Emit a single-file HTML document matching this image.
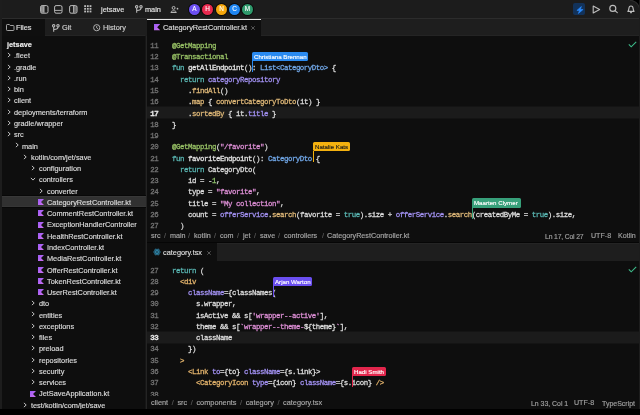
<!DOCTYPE html>
<html><head><meta charset="utf-8"><style>
*{margin:0;padding:0;box-sizing:border-box}
html,body{width:640px;height:415px;overflow:hidden;-webkit-font-smoothing:antialiased;background:#0e0e0e;font-family:"Liberation Sans",sans-serif;color:#d4d4d4}
.a{position:absolute}
.ui{will-change:transform;font-size:7.35px;white-space:pre;-webkit-text-stroke:0.15px}
.code{font-family:"Liberation Mono",monospace;font-size:6.667px;white-space:pre}
.line{will-change:transform;position:absolute;left:147px;width:493px;height:11.27px;line-height:11.27px;font-family:"Liberation Mono",monospace;font-size:6.667px;white-space:pre;color:#dedede}
.line .ln{position:absolute;left:-0.7px;top:2.0px;width:12px;text-align:right;color:#767676;font-size:7.4px;letter-spacing:-0.44px;-webkit-text-stroke:0.27px}
.line .ln.cur{color:#e8e8e8;font-weight:bold}
.line .cl{position:absolute;top:2.0px;font-size:7.4px;letter-spacing:-0.44px;-webkit-text-stroke:0.27px}
.hl{background:#1b1b1b}
.k{color:#5ab8b4}.an{color:#98c266}.ty{color:#72a9ea}.pr{color:#a291f2}.fn{color:#e0b979}.st{color:#de8fd6}.nu{color:#90c46b}.tg{color:#e4b46c}.fd{color:#e6e6e6}
</style></head><body>
<div class="a" style="left:0;top:0;width:640px;height:18px;background:#1c1c1c"></div>
<div class="a" style="left:0;top:18px;width:640px;height:1px;background:#2c2c2c"></div>
<div class="a" style="left:0;top:19px;width:640px;height:17px;background:#1e1e1e"></div>
<div class="a" style="left:0;top:19px;width:45px;height:17px;background:#0f0f0f"></div>
<div class="a" style="left:145px;top:36px;width:2px;height:373px;background:#161616"></div>
<div class="a" style="left:145.5px;top:36px;width:1px;height:373px;background:#242424"></div>
<div class="a" style="left:147px;top:19px;width:114px;height:17px;background:#0e0e0e"></div>
<div class="a" style="left:147px;top:19px;width:114px;height:1px;background:#e8e8e8"></div>
<div class="a ui" style="left:6.80px;top:39.10px;line-height:11.27px;font-weight:bold;color:#ececec">jetsave</div>
<svg class="a" style="left:6.50px;top:52.27px" width="4" height="6" viewBox="0 0 4 6"><path d="M0.9 0.9 L3.2 3 L0.9 5.1" fill="none" stroke="#c8c8c8" stroke-width="0.95"/></svg>
<div class="a ui" style="left:14.20px;top:50.37px;line-height:11.27px;color:#dcdcdc">.fleet</div>
<svg class="a" style="left:6.50px;top:63.54px" width="4" height="6" viewBox="0 0 4 6"><path d="M0.9 0.9 L3.2 3 L0.9 5.1" fill="none" stroke="#c8c8c8" stroke-width="0.95"/></svg>
<div class="a ui" style="left:14.20px;top:61.64px;line-height:11.27px;color:#dcdcdc">.gradle</div>
<svg class="a" style="left:6.50px;top:74.81px" width="4" height="6" viewBox="0 0 4 6"><path d="M0.9 0.9 L3.2 3 L0.9 5.1" fill="none" stroke="#c8c8c8" stroke-width="0.95"/></svg>
<div class="a ui" style="left:14.20px;top:72.91px;line-height:11.27px;color:#dcdcdc">.run</div>
<svg class="a" style="left:6.50px;top:86.08px" width="4" height="6" viewBox="0 0 4 6"><path d="M0.9 0.9 L3.2 3 L0.9 5.1" fill="none" stroke="#c8c8c8" stroke-width="0.95"/></svg>
<div class="a ui" style="left:14.20px;top:84.18px;line-height:11.27px;color:#dcdcdc">bin</div>
<svg class="a" style="left:6.50px;top:97.35px" width="4" height="6" viewBox="0 0 4 6"><path d="M0.9 0.9 L3.2 3 L0.9 5.1" fill="none" stroke="#c8c8c8" stroke-width="0.95"/></svg>
<div class="a ui" style="left:14.20px;top:95.45px;line-height:11.27px;color:#dcdcdc">client</div>
<svg class="a" style="left:6.50px;top:108.62px" width="4" height="6" viewBox="0 0 4 6"><path d="M0.9 0.9 L3.2 3 L0.9 5.1" fill="none" stroke="#c8c8c8" stroke-width="0.95"/></svg>
<div class="a ui" style="left:14.20px;top:106.72px;line-height:11.27px;color:#dcdcdc">deployments/terraform</div>
<svg class="a" style="left:6.50px;top:119.89px" width="4" height="6" viewBox="0 0 4 6"><path d="M0.9 0.9 L3.2 3 L0.9 5.1" fill="none" stroke="#c8c8c8" stroke-width="0.95"/></svg>
<div class="a ui" style="left:14.20px;top:117.99px;line-height:11.27px;color:#dcdcdc">gradle/wrapper</div>
<svg class="a" style="left:6.50px;top:131.16px" width="4" height="6" viewBox="0 0 4 6"><path d="M0.9 0.9 L3.2 3 L0.9 5.1" fill="none" stroke="#c8c8c8" stroke-width="0.95"/></svg>
<div class="a ui" style="left:14.20px;top:129.26px;line-height:11.27px;color:#dcdcdc">src</div>
<svg class="a" style="left:14.70px;top:142.43px" width="4" height="6" viewBox="0 0 4 6"><path d="M0.9 0.9 L3.2 3 L0.9 5.1" fill="none" stroke="#c8c8c8" stroke-width="0.95"/></svg>
<div class="a ui" style="left:22.40px;top:140.53px;line-height:11.27px;color:#dcdcdc">main</div>
<svg class="a" style="left:22.90px;top:153.70px" width="4" height="6" viewBox="0 0 4 6"><path d="M0.9 0.9 L3.2 3 L0.9 5.1" fill="none" stroke="#c8c8c8" stroke-width="0.95"/></svg>
<div class="a ui" style="left:30.60px;top:151.80px;line-height:11.27px;color:#dcdcdc">kotlin/com/jet/save</div>
<svg class="a" style="left:31.10px;top:164.97px" width="4" height="6" viewBox="0 0 4 6"><path d="M0.9 0.9 L3.2 3 L0.9 5.1" fill="none" stroke="#c8c8c8" stroke-width="0.95"/></svg>
<div class="a ui" style="left:38.80px;top:163.07px;line-height:11.27px;color:#dcdcdc">configuration</div>
<svg class="a" style="left:30.10px;top:177.24px" width="6" height="4" viewBox="0 0 6 4"><path d="M0.9 0.9 L3 3.1 L5.1 0.9" fill="none" stroke="#c8c8c8" stroke-width="0.95"/></svg>
<div class="a ui" style="left:38.80px;top:174.34px;line-height:11.27px;color:#dcdcdc">controllers</div>
<svg class="a" style="left:39.30px;top:187.51px" width="4" height="6" viewBox="0 0 4 6"><path d="M0.9 0.9 L3.2 3 L0.9 5.1" fill="none" stroke="#c8c8c8" stroke-width="0.95"/></svg>
<div class="a ui" style="left:47.00px;top:185.61px;line-height:11.27px;color:#dcdcdc">converter</div>
<div class="a" style="left:0;top:195px;width:146px;height:13.4px;background:linear-gradient(to bottom,#080808 0,#080808 1px,#383838 1px,#383838 2px,#313131 2px,#313131 11.4px,#363636 11.4px,#363636 12.4px,#080808 12.4px)"></div>
<svg class="a" style="left:38.30px;top:198.98px" width="6.0" height="6.0" viewBox="0 0 10 10"><defs><linearGradient id="kg" x1="0" y1="0" x2="1" y2="1"><stop offset="0" stop-color="#9b5cf6"/><stop offset="1" stop-color="#d070f0"/></linearGradient></defs><path d="M0 0 H10 L5 5 L10 10 H0 Z" fill="url(#kg)"/></svg>
<div class="a ui" style="left:47.00px;top:196.88px;line-height:11.27px;color:#dcdcdc">CategoryRestController.kt</div>
<svg class="a" style="left:38.30px;top:210.25px" width="6.0" height="6.0" viewBox="0 0 10 10"><defs><linearGradient id="kg" x1="0" y1="0" x2="1" y2="1"><stop offset="0" stop-color="#9b5cf6"/><stop offset="1" stop-color="#d070f0"/></linearGradient></defs><path d="M0 0 H10 L5 5 L10 10 H0 Z" fill="url(#kg)"/></svg>
<div class="a ui" style="left:47.00px;top:208.15px;line-height:11.27px;color:#dcdcdc">CommentRestController.kt</div>
<svg class="a" style="left:38.30px;top:221.52px" width="6.0" height="6.0" viewBox="0 0 10 10"><defs><linearGradient id="kg" x1="0" y1="0" x2="1" y2="1"><stop offset="0" stop-color="#9b5cf6"/><stop offset="1" stop-color="#d070f0"/></linearGradient></defs><path d="M0 0 H10 L5 5 L10 10 H0 Z" fill="url(#kg)"/></svg>
<div class="a ui" style="left:47.00px;top:219.42px;line-height:11.27px;color:#dcdcdc">ExceptionHandlerController</div>
<svg class="a" style="left:38.30px;top:232.79px" width="6.0" height="6.0" viewBox="0 0 10 10"><defs><linearGradient id="kg" x1="0" y1="0" x2="1" y2="1"><stop offset="0" stop-color="#9b5cf6"/><stop offset="1" stop-color="#d070f0"/></linearGradient></defs><path d="M0 0 H10 L5 5 L10 10 H0 Z" fill="url(#kg)"/></svg>
<div class="a ui" style="left:47.00px;top:230.69px;line-height:11.27px;color:#dcdcdc">HealthRestController.kt</div>
<svg class="a" style="left:38.30px;top:244.06px" width="6.0" height="6.0" viewBox="0 0 10 10"><defs><linearGradient id="kg" x1="0" y1="0" x2="1" y2="1"><stop offset="0" stop-color="#9b5cf6"/><stop offset="1" stop-color="#d070f0"/></linearGradient></defs><path d="M0 0 H10 L5 5 L10 10 H0 Z" fill="url(#kg)"/></svg>
<div class="a ui" style="left:47.00px;top:241.96px;line-height:11.27px;color:#dcdcdc">IndexController.kt</div>
<svg class="a" style="left:38.30px;top:255.33px" width="6.0" height="6.0" viewBox="0 0 10 10"><defs><linearGradient id="kg" x1="0" y1="0" x2="1" y2="1"><stop offset="0" stop-color="#9b5cf6"/><stop offset="1" stop-color="#d070f0"/></linearGradient></defs><path d="M0 0 H10 L5 5 L10 10 H0 Z" fill="url(#kg)"/></svg>
<div class="a ui" style="left:47.00px;top:253.23px;line-height:11.27px;color:#dcdcdc">MediaRestController.kt</div>
<svg class="a" style="left:38.30px;top:266.60px" width="6.0" height="6.0" viewBox="0 0 10 10"><defs><linearGradient id="kg" x1="0" y1="0" x2="1" y2="1"><stop offset="0" stop-color="#9b5cf6"/><stop offset="1" stop-color="#d070f0"/></linearGradient></defs><path d="M0 0 H10 L5 5 L10 10 H0 Z" fill="url(#kg)"/></svg>
<div class="a ui" style="left:47.00px;top:264.50px;line-height:11.27px;color:#dcdcdc">OfferRestController.kt</div>
<svg class="a" style="left:38.30px;top:277.87px" width="6.0" height="6.0" viewBox="0 0 10 10"><defs><linearGradient id="kg" x1="0" y1="0" x2="1" y2="1"><stop offset="0" stop-color="#9b5cf6"/><stop offset="1" stop-color="#d070f0"/></linearGradient></defs><path d="M0 0 H10 L5 5 L10 10 H0 Z" fill="url(#kg)"/></svg>
<div class="a ui" style="left:47.00px;top:275.77px;line-height:11.27px;color:#dcdcdc">TokenRestController.kt</div>
<svg class="a" style="left:38.30px;top:289.14px" width="6.0" height="6.0" viewBox="0 0 10 10"><defs><linearGradient id="kg" x1="0" y1="0" x2="1" y2="1"><stop offset="0" stop-color="#9b5cf6"/><stop offset="1" stop-color="#d070f0"/></linearGradient></defs><path d="M0 0 H10 L5 5 L10 10 H0 Z" fill="url(#kg)"/></svg>
<div class="a ui" style="left:47.00px;top:287.04px;line-height:11.27px;color:#dcdcdc">UserRestController.kt</div>
<svg class="a" style="left:31.10px;top:300.21px" width="4" height="6" viewBox="0 0 4 6"><path d="M0.9 0.9 L3.2 3 L0.9 5.1" fill="none" stroke="#c8c8c8" stroke-width="0.95"/></svg>
<div class="a ui" style="left:38.80px;top:298.31px;line-height:11.27px;color:#dcdcdc">dto</div>
<svg class="a" style="left:31.10px;top:311.48px" width="4" height="6" viewBox="0 0 4 6"><path d="M0.9 0.9 L3.2 3 L0.9 5.1" fill="none" stroke="#c8c8c8" stroke-width="0.95"/></svg>
<div class="a ui" style="left:38.80px;top:309.58px;line-height:11.27px;color:#dcdcdc">entities</div>
<svg class="a" style="left:31.10px;top:322.75px" width="4" height="6" viewBox="0 0 4 6"><path d="M0.9 0.9 L3.2 3 L0.9 5.1" fill="none" stroke="#c8c8c8" stroke-width="0.95"/></svg>
<div class="a ui" style="left:38.80px;top:320.85px;line-height:11.27px;color:#dcdcdc">exceptions</div>
<svg class="a" style="left:31.10px;top:334.02px" width="4" height="6" viewBox="0 0 4 6"><path d="M0.9 0.9 L3.2 3 L0.9 5.1" fill="none" stroke="#c8c8c8" stroke-width="0.95"/></svg>
<div class="a ui" style="left:38.80px;top:332.12px;line-height:11.27px;color:#dcdcdc">files</div>
<svg class="a" style="left:31.10px;top:345.29px" width="4" height="6" viewBox="0 0 4 6"><path d="M0.9 0.9 L3.2 3 L0.9 5.1" fill="none" stroke="#c8c8c8" stroke-width="0.95"/></svg>
<div class="a ui" style="left:38.80px;top:343.39px;line-height:11.27px;color:#dcdcdc">preload</div>
<svg class="a" style="left:31.10px;top:356.56px" width="4" height="6" viewBox="0 0 4 6"><path d="M0.9 0.9 L3.2 3 L0.9 5.1" fill="none" stroke="#c8c8c8" stroke-width="0.95"/></svg>
<div class="a ui" style="left:38.80px;top:354.66px;line-height:11.27px;color:#dcdcdc">repositories</div>
<svg class="a" style="left:31.10px;top:367.83px" width="4" height="6" viewBox="0 0 4 6"><path d="M0.9 0.9 L3.2 3 L0.9 5.1" fill="none" stroke="#c8c8c8" stroke-width="0.95"/></svg>
<div class="a ui" style="left:38.80px;top:365.93px;line-height:11.27px;color:#dcdcdc">security</div>
<svg class="a" style="left:31.10px;top:379.10px" width="4" height="6" viewBox="0 0 4 6"><path d="M0.9 0.9 L3.2 3 L0.9 5.1" fill="none" stroke="#c8c8c8" stroke-width="0.95"/></svg>
<div class="a ui" style="left:38.80px;top:377.20px;line-height:11.27px;color:#dcdcdc">services</div>
<svg class="a" style="left:30.10px;top:390.57px" width="6.0" height="6.0" viewBox="0 0 10 10"><defs><linearGradient id="kg" x1="0" y1="0" x2="1" y2="1"><stop offset="0" stop-color="#9b5cf6"/><stop offset="1" stop-color="#d070f0"/></linearGradient></defs><path d="M0 0 H10 L5 5 L10 10 H0 Z" fill="url(#kg)"/></svg>
<div class="a ui" style="left:38.80px;top:388.47px;line-height:11.27px;color:#dcdcdc">JetSaveApplication.kt</div>
<svg class="a" style="left:22.90px;top:401.64px" width="4" height="6" viewBox="0 0 4 6"><path d="M0.9 0.9 L3.2 3 L0.9 5.1" fill="none" stroke="#c8c8c8" stroke-width="0.95"/></svg>
<div class="a ui" style="left:30.60px;top:399.74px;line-height:11.27px;color:#dcdcdc">test/kotlin/com/jet/save</div>
<div class="a" style="left:147px;top:106px;width:493px;height:13px;background:linear-gradient(to bottom,#141414 0,#141414 1px,#1b1b1b 1px,#1b1b1b 12px,#141414 12px,#141414 13px)"></div>
<div class="a" style="left:147px;top:331px;width:493px;height:13px;background:linear-gradient(to bottom,#141414 0,#141414 1px,#1b1b1b 1px,#1b1b1b 12px,#141414 12px,#141414 13px)"></div>
<div class="line" style="top:38.90px"><span class="ln">11</span><span class="cl" style="left:25.0px"><span class="an">@GetMapping</span></span></div>
<div class="line" style="top:50.17px"><span class="ln">12</span><span class="cl" style="left:25.0px"><span class="an">@Transactional</span></span></div>
<div class="line" style="top:61.44px"><span class="ln">13</span><span class="cl" style="left:25.0px"><span class="k">fun</span> <span class="fd">getAllEndpoint</span>(): <span class="ty">List&lt;CategoryDto&gt;</span> {</span></div>
<div class="line" style="top:72.71px"><span class="ln">14</span><span class="cl" style="left:33.0px"><span class="k">return</span> <span class="pr">categoryRepository</span></span></div>
<div class="line" style="top:83.98px"><span class="ln">15</span><span class="cl" style="left:41.0px">.<span class="fn">findAll</span>()</span></div>
<div class="line" style="top:95.25px"><span class="ln">16</span><span class="cl" style="left:41.0px">.<span class="fn">map</span> { <span class="fn">convertCategoryToDto</span>(it) }</span></div>
<div class="line" style="top:106.52px"><span class="ln cur">17</span><span class="cl" style="left:41.0px">.<span class="fn">sortedBy</span> { it.<span class="pr">title</span> }</span></div>
<div class="line" style="top:117.79px"><span class="ln">18</span><span class="cl" style="left:25.0px">}</span></div>
<div class="line" style="top:129.06px"><span class="ln">19</span><span class="cl" style="left:25.0px"></span></div>
<div class="line" style="top:140.33px"><span class="ln">20</span><span class="cl" style="left:25.0px"><span class="an">@GetMapping</span>(<span class="st">"/favorite"</span>)</span></div>
<div class="line" style="top:151.60px"><span class="ln">21</span><span class="cl" style="left:25.0px"><span class="k">fun</span> <span class="fd">favoriteEndpoint</span>(): <span class="ty">CategoryDto</span> {</span></div>
<div class="line" style="top:162.87px"><span class="ln">22</span><span class="cl" style="left:33.0px"><span class="k">return</span> CategoryDto(</span></div>
<div class="line" style="top:174.14px"><span class="ln">23</span><span class="cl" style="left:41.0px">id = -<span class="nu">1</span>,</span></div>
<div class="line" style="top:185.41px"><span class="ln">24</span><span class="cl" style="left:41.0px">type = <span class="st">"favorite"</span>,</span></div>
<div class="line" style="top:196.68px"><span class="ln">25</span><span class="cl" style="left:41.0px">title = <span class="st">"My collection"</span>,</span></div>
<div class="line" style="top:207.95px"><span class="ln">26</span><span class="cl" style="left:41.0px">count = <span class="pr">offerService</span>.<span class="fn">search</span>(favorite = <span class="k">true</span>).size + <span class="pr">offerService</span>.<span class="fn">search</span>(createdByMe = <span class="k">true</span>).size,</span></div>
<div class="line" style="top:219.22px"><span class="ln">27</span><span class="cl" style="left:33.0px">)</span></div>
<div class="line" style="top:230.49px"><span class="ln">28</span><span class="cl" style="left:25.0px">}</span></div>
<div class="a" style="left:147px;top:230px;width:493px;height:12px;background:#0e0e0e"></div>
<div class="a" style="left:147px;top:242px;width:493px;height:1px;background:#060606"></div>
<div class="a" style="left:147px;top:243px;width:493px;height:18px;background:#1e1e1e"></div>
<div class="a" style="left:147px;top:243px;width:70px;height:18px;background:#0e0e0e"></div>
<div class="line" style="top:263.60px"><span class="ln">27</span><span class="cl" style="left:25.0px"><span class="k">return</span> (</span></div>
<div class="line" style="top:274.87px"><span class="ln">28</span><span class="cl" style="left:33.0px"><span class="tg">&lt;div</span></span></div>
<div class="line" style="top:286.14px"><span class="ln">29</span><span class="cl" style="left:41.0px"><span class="pr">className</span>={classNames(</span></div>
<div class="line" style="top:297.41px"><span class="ln">30</span><span class="cl" style="left:49.0px">s.wrapper,</span></div>
<div class="line" style="top:308.68px"><span class="ln">31</span><span class="cl" style="left:49.0px">isActive &amp;&amp; s[<span class="st">'wrapper--active'</span>],</span></div>
<div class="line" style="top:319.95px"><span class="ln">32</span><span class="cl" style="left:49.0px">theme &amp;&amp; s[<span class="st">`wrapper--theme-</span>${theme}<span class="st">`</span>],</span></div>
<div class="line" style="top:331.22px"><span class="ln cur">33</span><span class="cl" style="left:49.0px">className</span></div>
<div class="line" style="top:342.49px"><span class="ln">34</span><span class="cl" style="left:41.0px">})</span></div>
<div class="line" style="top:353.76px"><span class="ln">35</span><span class="cl" style="left:33.0px"><span class="tg">&gt;</span></span></div>
<div class="line" style="top:365.03px"><span class="ln">36</span><span class="cl" style="left:41.0px"><span class="tg">&lt;Link</span> <span class="pr">to</span>={to} <span class="pr">className</span>={s.link}&gt;</span></div>
<div class="line" style="top:376.30px"><span class="ln">37</span><span class="cl" style="left:49.0px"><span class="tg">&lt;CategoryIcon</span> <span class="pr">type</span>={icon} <span class="pr">className</span>={s.icon} <span class="tg">/&gt;</span></span></div>
<div class="line" style="top:387.57px"><span class="ln">38</span><span class="cl" style="left:41.0px"></span></div>
<div class="a" style="left:147px;top:396px;width:493px;height:13px;background:#0e0e0e"></div>
<div class="a" style="left:261px;top:35px;width:379px;height:1px;background:#242424"></div>
<div class="a" style="left:45px;top:35px;width:100px;height:1px;background:#242424"></div>
<div class="a" style="left:217px;top:243px;width:423px;height:1px;background:#242424"></div>
<div class="a" style="left:0;top:409px;width:640px;height:6px;background:#000"></div>
<div class="a" style="left:630px;top:0;width:10px;height:10px;background:radial-gradient(circle at 0 100%,rgba(0,0,0,0) 8.6px,#2a2a2a 9.2px,#2a2a2a 9.8px,#000 10.4px)"></div>
<div class="a" style="left:0;top:0;width:1.5px;height:409px;background:#1d1d1d"></div>
<div class="a" style="left:638.5px;top:0;width:1.5px;height:409px;background:#1d1d1d"></div>
<svg class="a" style="left:39.9px;top:5px" width="9" height="9" viewBox="0 0 9 9"><rect x="1" y="1" width="3" height="6.8" rx="1" fill="#8c8c8c"/><rect x="0.6" y="0.6" width="7.4" height="7.6" rx="1.5" fill="none" stroke="#bdbdbd" stroke-width="1"/><path d="M4 1 V7.8" stroke="#bdbdbd" stroke-width="0.9"/></svg>
<svg class="a" style="left:54.1px;top:5px" width="9" height="9" viewBox="0 0 9 9"><rect x="0.6" y="0.6" width="7.4" height="7.6" rx="1.5" fill="none" stroke="#bdbdbd" stroke-width="1"/><path d="M1 5.4 H7.6" stroke="#bdbdbd" stroke-width="0.9"/></svg>
<svg class="a" style="left:68.6px;top:5px" width="9" height="9" viewBox="0 0 9 9"><rect x="4.6" y="1" width="3" height="6.8" rx="1" fill="#6c6c6c"/><rect x="0.6" y="0.6" width="7.4" height="7.6" rx="1.5" fill="none" stroke="#bdbdbd" stroke-width="1"/><path d="M4.6 1 V7.8" stroke="#bdbdbd" stroke-width="0.9"/></svg>
<svg class="a" style="left:83.6px;top:5.4px" width="8" height="8" viewBox="0 0 8 8"><rect x="0.2" y="0.2" width="1.8" height="1.8" fill="#bdbdbd"/><rect x="0.2" y="2.9" width="1.8" height="1.8" fill="#bdbdbd"/><rect x="0.2" y="5.6" width="1.8" height="1.8" fill="#bdbdbd"/><rect x="2.9" y="0.2" width="1.8" height="1.8" fill="#bdbdbd"/><rect x="2.9" y="2.9" width="1.8" height="1.8" fill="#bdbdbd"/><rect x="2.9" y="5.6" width="1.8" height="1.8" fill="#bdbdbd"/><rect x="5.6" y="0.2" width="1.8" height="1.8" fill="#bdbdbd"/><rect x="5.6" y="2.9" width="1.8" height="1.8" fill="#bdbdbd"/><rect x="5.6" y="5.6" width="1.8" height="1.8" fill="#bdbdbd"/></svg>
<div class="a ui" style="left:101px;top:4.2px;line-height:11px;color:#e0e0e0">jetsave</div>
<svg class="a" style="left:135px;top:5px" width="8" height="8" viewBox="0 0 8 8"><circle cx="1.7" cy="1.8" r="1.2" fill="none" stroke="#bdbdbd" stroke-width="1.05"/><circle cx="6" cy="1.8" r="1.2" fill="none" stroke="#bdbdbd" stroke-width="1.05"/><path d="M1.7 3 V7.7 M6 3 C6 5 4.2 5.4 1.8 5.6" fill="none" stroke="#bdbdbd" stroke-width="1.05"/></svg>
<div class="a ui" style="left:144.8px;top:4.2px;line-height:11px;color:#e0e0e0">main</div>
<svg class="a" style="left:170.3px;top:4.5px" width="9" height="9" viewBox="0 0 9 9"><circle cx="3.6" cy="2.9" r="1.45" fill="none" stroke="#bdbdbd" stroke-width="0.95"/><path d="M0.9 7.5 C0.9 5.2 6.3 5.2 6.3 7.5 Z" fill="none" stroke="#bdbdbd" stroke-width="0.95" stroke-linejoin="round"/><circle cx="7.5" cy="3.7" r="0.85" fill="#bdbdbd"/></svg>
<div class="a" style="left:188.0px;top:2.6px;width:13px;height:13px;border-radius:50%;background:#0a0a0a"></div>
<div class="a" style="left:189.0px;top:3.6px;width:11px;height:11px;border-radius:50%;background:#6c4ff2"></div>
<div class="a ui" style="left:189.0px;top:2.9px;width:11px;height:11px;line-height:11px;text-align:center;font-size:6.4px;color:#fff;-webkit-text-stroke:0.1px">A</div>
<div class="a" style="left:201.4px;top:2.6px;width:13px;height:13px;border-radius:50%;background:#0a0a0a"></div>
<div class="a" style="left:202.4px;top:3.6px;width:11px;height:11px;border-radius:50%;background:#e8294e"></div>
<div class="a ui" style="left:202.4px;top:2.9px;width:11px;height:11px;line-height:11px;text-align:center;font-size:6.4px;color:#fff;-webkit-text-stroke:0.1px">H</div>
<div class="a" style="left:214.7px;top:2.6px;width:13px;height:13px;border-radius:50%;background:#0a0a0a"></div>
<div class="a" style="left:215.7px;top:3.6px;width:11px;height:11px;border-radius:50%;background:#f5a70d"></div>
<div class="a ui" style="left:215.7px;top:2.9px;width:11px;height:11px;line-height:11px;text-align:center;font-size:6.4px;color:#fff;-webkit-text-stroke:0.1px">N</div>
<div class="a" style="left:228.0px;top:2.6px;width:13px;height:13px;border-radius:50%;background:#0a0a0a"></div>
<div class="a" style="left:229.0px;top:3.6px;width:11px;height:11px;border-radius:50%;background:#1f86f2"></div>
<div class="a ui" style="left:229.0px;top:2.9px;width:11px;height:11px;line-height:11px;text-align:center;font-size:6.4px;color:#fff;-webkit-text-stroke:0.1px">C</div>
<div class="a" style="left:241.3px;top:2.6px;width:13px;height:13px;border-radius:50%;background:#0a0a0a"></div>
<div class="a" style="left:242.3px;top:3.6px;width:11px;height:11px;border-radius:50%;background:#2f9a6c"></div>
<div class="a ui" style="left:242.3px;top:2.9px;width:11px;height:11px;line-height:11px;text-align:center;font-size:6.4px;color:#fff;-webkit-text-stroke:0.1px">M</div>
<div class="a" style="left:573px;top:3.3px;width:12px;height:12px;border-radius:2px;background:#12325a"></div>
<svg class="a" style="left:575.6px;top:5.6px" width="8" height="8" viewBox="0 0 8 8"><path d="M5.4 0.5 L0.9 4.4 H3.5 L2.4 7.5 L7.1 3.5 H4.4 Z" fill="#2b8cff" stroke="#2b8cff" stroke-width="0.6" stroke-linejoin="round"/></svg>
<svg class="a" style="left:592px;top:5px" width="9" height="9" viewBox="0 0 9 9"><path d="M1.2 1.1 L7.6 4.5 L1.2 7.9 Z" fill="none" stroke="#bdbdbd" stroke-width="1.1" stroke-linejoin="round"/></svg>
<svg class="a" style="left:609px;top:4px" width="10" height="10" viewBox="0 0 10 10"><circle cx="3.8" cy="4.4" r="3" fill="none" stroke="#bdbdbd" stroke-width="1.15"/><path d="M6 6.6 L8.3 8.7" stroke="#bdbdbd" stroke-width="1.1" stroke-linecap="round"/></svg>
<svg class="a" style="left:627.3px;top:4.6px" width="8" height="9" viewBox="0 0 8 9"><path d="M4 1 C5.6 1 6.1 2.5 6.2 3.9 C6.3 5.1 6.7 5.8 7.1 6.4 L0.9 6.4 C1.3 5.8 1.7 5.1 1.8 3.9 C1.9 2.5 2.4 1 4 1 Z" fill="none" stroke="#bdbdbd" stroke-width="1.1" stroke-linejoin="round"/><circle cx="4" cy="7.4" r="0.95" fill="#bdbdbd"/></svg>
<svg class="a" style="left:5.8px;top:23.8px" width="9" height="7" viewBox="0 0 9 7"><path d="M0.5 1.3 Q0.5 0.5 1.3 0.5 H3 Q3.5 0.5 3.8 0.9 L4.3 1.5 H7.2 Q8 1.5 8 2.3 V5.7 Q8 6.5 7.2 6.5 H1.3 Q0.5 6.5 0.5 5.7 Z" fill="none" stroke="#bdbdbd" stroke-width="0.85"/></svg>
<div class="a ui" style="left:16.2px;top:22px;line-height:11px;color:#e0e0e0">Files</div>
<svg class="a" style="left:52.2px;top:24px" width="8" height="8" viewBox="0 0 8 8"><circle cx="1.7" cy="1.8" r="1.2" fill="none" stroke="#bdbdbd" stroke-width="1.05"/><circle cx="6" cy="1.8" r="1.2" fill="none" stroke="#bdbdbd" stroke-width="1.05"/><path d="M1.7 3 V7.7 M6 3 C6 5 4.2 5.4 1.8 5.6" fill="none" stroke="#bdbdbd" stroke-width="1.05"/></svg>
<div class="a ui" style="left:61.6px;top:22px;line-height:11px;color:#d0d0d0">Git</div>
<svg class="a" style="left:92.5px;top:24px" width="8" height="8" viewBox="0 0 8 8"><circle cx="3.7" cy="3.7" r="3.1" fill="none" stroke="#bdbdbd" stroke-width="0.9"/><path d="M3.7 1.9 V3.9 L5.1 5.1" fill="none" stroke="#bdbdbd" stroke-width="0.85"/></svg>
<div class="a ui" style="left:103px;top:22px;line-height:11px;color:#d0d0d0">History</div>
<svg class="a" style="left:153.80px;top:24.30px" width="6.3" height="6.3" viewBox="0 0 10 10"><defs><linearGradient id="kg" x1="0" y1="0" x2="1" y2="1"><stop offset="0" stop-color="#9b5cf6"/><stop offset="1" stop-color="#d070f0"/></linearGradient></defs><path d="M0 0 H10 L5 5 L10 10 H0 Z" fill="url(#kg)"/></svg>
<div class="a ui" style="left:163px;top:22px;line-height:11px;color:#dedede">CategoryRestController.kt</div>
<svg class="a" style="left:251px;top:25.5px" width="4" height="4" viewBox="0 0 4 4"><path d="M0.3 0.3 L3.7 3.7 M3.7 0.3 L0.3 3.7" stroke="#8a8a8a" stroke-width="0.6"/></svg>
<svg class="a" style="left:152.9px;top:248.4px" width="8" height="8" viewBox="0 0 8 8"><g fill="none" stroke="#2f86aa" stroke-width="0.8" transform="translate(4 4)"><ellipse rx="3.4" ry="1.35"/><ellipse rx="3.4" ry="1.35" transform="rotate(60)"/><ellipse rx="3.4" ry="1.35" transform="rotate(120)"/></g><circle cx="4" cy="4" r="0.8" fill="#2f86aa"/></svg>
<div class="a ui" style="left:163px;top:247px;line-height:11px;color:#dedede">category.tsx</div>
<svg class="a" style="left:207.2px;top:251px" width="4" height="4" viewBox="0 0 4 4"><path d="M0.3 0.3 L3.7 3.7 M3.7 0.3 L0.3 3.7" stroke="#8a8a8a" stroke-width="0.6"/></svg>
<div class="a ui" style="left:151px;top:230.2px;line-height:11px;color:#a8a8a8;font-size:7.2px">src</div>
<div class="a ui" style="left:169.8px;top:230.2px;line-height:11px;color:#a8a8a8;font-size:7.2px">main</div>
<div class="a ui" style="left:193.9px;top:230.2px;line-height:11px;color:#a8a8a8;font-size:7.2px">kotlin</div>
<div class="a ui" style="left:220.4px;top:230.2px;line-height:11px;color:#a8a8a8;font-size:7.2px">com</div>
<div class="a ui" style="left:243px;top:230.2px;line-height:11px;color:#a8a8a8;font-size:7.2px">jet</div>
<div class="a ui" style="left:260px;top:230.2px;line-height:11px;color:#a8a8a8;font-size:7.2px">save</div>
<div class="a ui" style="left:283.9px;top:230.2px;line-height:11px;color:#a8a8a8;font-size:7.2px">controllers</div>
<div class="a ui" style="left:327px;top:230.2px;line-height:11px;color:#a8a8a8;font-size:7.2px">CategoryRestController.kt</div>
<div class="a ui" style="left:164px;top:230.2px;line-height:11px;color:#5a5a5a;font-size:7.35px">/</div>
<div class="a ui" style="left:188.2px;top:230.2px;line-height:11px;color:#5a5a5a;font-size:7.35px">/</div>
<div class="a ui" style="left:214px;top:230.2px;line-height:11px;color:#5a5a5a;font-size:7.35px">/</div>
<div class="a ui" style="left:237px;top:230.2px;line-height:11px;color:#5a5a5a;font-size:7.35px">/</div>
<div class="a ui" style="left:254px;top:230.2px;line-height:11px;color:#5a5a5a;font-size:7.35px">/</div>
<div class="a ui" style="left:278px;top:230.2px;line-height:11px;color:#5a5a5a;font-size:7.35px">/</div>
<div class="a ui" style="left:321.7px;top:230.2px;line-height:11px;color:#5a5a5a;font-size:7.35px">/</div>
<div class="a ui" style="left:545px;top:230.6px;line-height:11px;color:#a0a0a0;font-size:6.8px;letter-spacing:-0.15px">Ln 17, Col 27</div>
<div class="a ui" style="left:591px;top:230.6px;line-height:11px;color:#a0a0a0;font-size:7.1px">UTF-8</div>
<div class="a ui" style="left:617.6px;top:230.6px;line-height:11px;color:#a0a0a0;font-size:7.1px">Kotlin</div>
<div class="a ui" style="left:151px;top:397.2px;line-height:11px;color:#a8a8a8;font-size:7.35px">client<span style="color:#5a5a5a;padding:0 3.6px">/</span>src<span style="color:#5a5a5a;padding:0 3.6px">/</span>components<span style="color:#5a5a5a;padding:0 3.6px">/</span>category<span style="color:#5a5a5a;padding:0 3.6px">/</span>category.tsx</div>
<div class="a ui" style="left:530.7px;top:397.6px;line-height:11px;color:#a0a0a0;font-size:6.9px">Ln 33, Col 1</div>
<div class="a ui" style="left:574.4px;top:397.6px;line-height:11px;color:#a0a0a0;font-size:7.1px">UTF-8</div>
<div class="a ui" style="left:601.6px;top:397.6px;line-height:11px;color:#a0a0a0;font-size:7.0px">TypeScript</div>
<svg class="a" style="left:627.5px;top:40.7px" width="9" height="7" viewBox="0 0 9 7"><path d="M0.8 3.4 L3.2 5.8 L8.2 0.8" fill="none" stroke="#3dbb8a" stroke-width="1.1"/></svg>
<svg class="a" style="left:627.5px;top:265.7px" width="9" height="7" viewBox="0 0 9 7"><path d="M0.8 3.4 L3.2 5.8 L8.2 0.8" fill="none" stroke="#3dbb8a" stroke-width="1.1"/></svg>
<div class="a" style="left:252.0px;top:51.9px;width:56px;height:9.4px;border-radius:1.5px;background:#2a8af0"></div>
<div class="a ui" style="left:254.2px;top:51.9px;line-height:9.4px;font-size:6.15px;color:#ffffff">Christiana Brennan</div>
<div class="a" style="left:252.0px;top:60.4px;width:1px;height:11.8px;background:#2a8af0"></div>
<div class="a" style="left:313.0px;top:142.1px;width:37px;height:9.4px;border-radius:1.5px;background:#f4b10f"></div>
<div class="a ui" style="left:315.2px;top:142.1px;line-height:9.4px;font-size:6.15px;color:#1a1a1a">Natalie Kats</div>
<div class="a" style="left:313.0px;top:150.6px;width:1px;height:11.8px;background:#f4b10f"></div>
<div class="a" style="left:472.0px;top:198.4px;width:49px;height:9.4px;border-radius:1.5px;background:#37a07a"></div>
<div class="a ui" style="left:474.2px;top:198.4px;line-height:9.4px;font-size:6.15px;color:#ffffff">Maarten Clymer</div>
<div class="a" style="left:472.0px;top:206.9px;width:1px;height:11.8px;background:#37a07a"></div>
<div class="a" style="left:273.0px;top:276.6px;width:39px;height:9.4px;border-radius:1.5px;background:#6a4ef0"></div>
<div class="a ui" style="left:275.2px;top:276.6px;line-height:9.4px;font-size:6.15px;color:#ffffff">Arjan Warton</div>
<div class="a" style="left:273.0px;top:285.1px;width:1px;height:11.8px;background:#6a4ef0"></div>
<div class="a" style="left:352.0px;top:366.8px;width:33.5px;height:9.4px;border-radius:1.5px;background:#e2264c"></div>
<div class="a ui" style="left:354.2px;top:366.8px;line-height:9.4px;font-size:6.15px;color:#ffffff">Hadi Smith</div>
<div class="a" style="left:352.0px;top:375.3px;width:1px;height:11.8px;background:#e2264c"></div>
</body></html>
